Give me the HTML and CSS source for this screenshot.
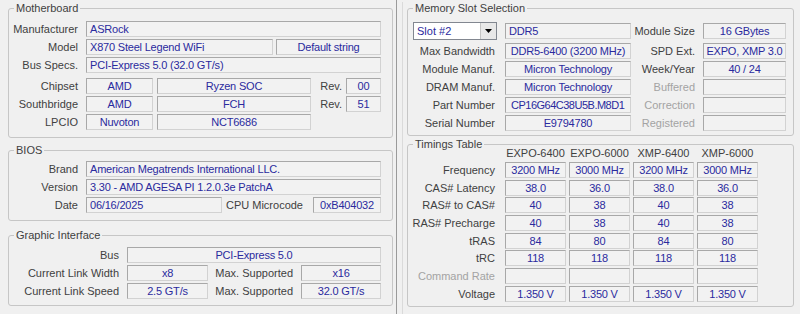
FILE: index.html
```html
<!DOCTYPE html>
<html lang="en">

<head>
    <meta charset="UTF-8">
    <meta name="viewport" content="width=device-width, initial-scale=1.0">
    <title>CPU-Z</title>
    <link rel="stylesheet" href="styles.css">
</head>

<body>
    <!-- 左边: Mainboard -->
    <div class="win win-left">
        <fieldset class="grp grp-mb">
            <legend>Motherboard</legend>
            <div class="row">
                <span class="lb lb-l">Manufacturer</span>
                <span class="f w295">ASRock</span>
            </div>
            <div class="row">
                <span class="lb lb-l">Model</span>
                <span class="f w187">X870 Steel Legend WiFi</span>
                <span class="f w105 c ml3">Default string</span>
            </div>
            <div class="row">
                <span class="lb lb-l">Bus Specs.</span>
                <span class="f w295">PCI-Express 5.0 (32.0 GT/s)</span>
            </div>
            <div class="row row-sep">
                <span class="lb lb-l">Chipset</span>
                <span class="f w67 c">AMD</span>
                <span class="f w154 c ml4">Ryzen SOC</span>
                <span class="lb lb-rev">Rev.</span>
                <span class="f w35 c ml4">00</span>
            </div>
            <div class="row">
                <span class="lb lb-l">Southbridge</span>
                <span class="f w67 c">AMD</span>
                <span class="f w154 c ml4">FCH</span>
                <span class="lb lb-rev">Rev.</span>
                <span class="f w35 c ml4">51</span>
            </div>
            <div class="row">
                <span class="lb lb-l">LPCIO</span>
                <span class="f w67 c">Nuvoton</span>
                <span class="f w154 c ml4">NCT6686</span>
            </div>
        </fieldset>

        <fieldset class="grp grp-bios">
            <legend>BIOS</legend>
            <div class="row">
                <span class="lb lb-l">Brand</span>
                <span class="f w295">American Megatrends International LLC.</span>
            </div>
            <div class="row">
                <span class="lb lb-l">Version</span>
                <span class="f w295">3.30 - AMD AGESA PI 1.2.0.3e PatchA</span>
            </div>
            <div class="row">
                <span class="lb lb-l">Date</span>
                <span class="f w136">06/16/2025</span>
                <span class="lb lb-mc">CPU Microcode</span>
                <span class="f w68 c">0xB404032</span>
            </div>
        </fieldset>

        <fieldset class="grp grp-gfx">
            <legend>Graphic Interface</legend>
            <div class="row">
                <span class="lb lb-g">Bus</span>
                <span class="f w254 c">PCI-Express 5.0</span>
            </div>
            <div class="row">
                <span class="lb lb-g">Current Link Width</span>
                <span class="f w81 c">x8</span>
                <span class="lb lb-max">Max. Supported</span>
                <span class="f w80 c">x16</span>
            </div>
            <div class="row">
                <span class="lb lb-g">Current Link Speed</span>
                <span class="f w81 c">2.5 GT/s</span>
                <span class="lb lb-max">Max. Supported</span>
                <span class="f w80 c">32.0 GT/s</span>
            </div>
        </fieldset>
    </div>

    <!-- 右边: SPD -->
    <div class="win win-right">
        <div class="page">
            <fieldset class="grp grp-slot">
                <legend>Memory Slot Selection</legend>
                <div class="row row-first">
                    <div class="combo">
                        <span class="combo-text">Slot #2</span>
                        <span class="combo-btn"><svg width="7" height="4" viewBox="0 0 7 4"><path d="M0 0H7L3.5 4Z" fill="#000"/></svg></span>
                    </div>
                    <span class="f w126">DDR5</span>
                    <span class="lb lb-r2">Module Size</span>
                    <span class="f w83 c">16 GBytes</span>
                </div>
                <div class="row">
                    <span class="lb lb-r">Max Bandwidth</span>
                    <span class="f w126 c">DDR5-6400 (3200 MHz)</span>
                    <span class="lb lb-r2">SPD Ext.</span>
                    <span class="f w83 c">EXPO, XMP 3.0</span>
                </div>
                <div class="row">
                    <span class="lb lb-r">Module Manuf.</span>
                    <span class="f w126 c">Micron Technology</span>
                    <span class="lb lb-r2">Week/Year</span>
                    <span class="f w83 c">40 / 24</span>
                </div>
                <div class="row">
                    <span class="lb lb-r">DRAM Manuf.</span>
                    <span class="f w126 c">Micron Technology</span>
                    <span class="lb lb-r2 off">Buffered</span>
                    <span class="f w83"></span>
                </div>
                <div class="row">
                    <span class="lb lb-r">Part Number</span>
                    <span class="f w126 pn">CP16G64C38U5B.M8D1</span>
                    <span class="lb lb-r2 off">Correction</span>
                    <span class="f w83"></span>
                </div>
                <div class="row">
                    <span class="lb lb-r">Serial Number</span>
                    <span class="f w126 c">E9794780</span>
                    <span class="lb lb-r2 off">Registered</span>
                    <span class="f w83"></span>
                </div>
            </fieldset>

            <fieldset class="grp grp-tim">
                <legend>Timings Table</legend>
                <div class="trow thead">
                    <span class="lb lb-r"></span>
                    <span class="th">EXPO-6400</span>
                    <span class="th">EXPO-6000</span>
                    <span class="th">XMP-6400</span>
                    <span class="th">XMP-6000</span>
                </div>
                <div class="trow">
                    <span class="lb lb-r">Frequency</span>
                    <span class="f td">3200 MHz</span>
                    <span class="f td">3000 MHz</span>
                    <span class="f td">3200 MHz</span>
                    <span class="f td">3000 MHz</span>
                </div>
                <div class="trow">
                    <span class="lb lb-r">CAS# Latency</span>
                    <span class="f td">38.0</span>
                    <span class="f td">36.0</span>
                    <span class="f td">38.0</span>
                    <span class="f td">36.0</span>
                </div>
                <div class="trow">
                    <span class="lb lb-r">RAS# to CAS#</span>
                    <span class="f td">40</span>
                    <span class="f td">38</span>
                    <span class="f td">40</span>
                    <span class="f td">38</span>
                </div>
                <div class="trow">
                    <span class="lb lb-r">RAS# Precharge</span>
                    <span class="f td">40</span>
                    <span class="f td">38</span>
                    <span class="f td">40</span>
                    <span class="f td">38</span>
                </div>
                <div class="trow">
                    <span class="lb lb-r">tRAS</span>
                    <span class="f td">84</span>
                    <span class="f td">80</span>
                    <span class="f td">84</span>
                    <span class="f td">80</span>
                </div>
                <div class="trow">
                    <span class="lb lb-r">tRC</span>
                    <span class="f td">118</span>
                    <span class="f td">118</span>
                    <span class="f td">118</span>
                    <span class="f td">118</span>
                </div>
                <div class="trow">
                    <span class="lb lb-r off">Command Rate</span>
                    <span class="f td"></span>
                    <span class="f td"></span>
                    <span class="f td"></span>
                    <span class="f td"></span>
                </div>
                <div class="trow">
                    <span class="lb lb-r">Voltage</span>
                    <span class="f td">1.350 V</span>
                    <span class="f td">1.350 V</span>
                    <span class="f td">1.350 V</span>
                    <span class="f td">1.350 V</span>
                </div>
            </fieldset>
        </div>
    </div>
</body>

</html>
```

FILE: styles.css
```css
* {
    margin: 0;
    padding: 0;
    box-sizing: border-box;
}

body {
    width: 800px;
    height: 314px;
    overflow: hidden;
    display: flex;
    background-color: #f0f0f0;
    font-family: "Liberation Sans", Arial, sans-serif;
    font-size: 11px;
    color: #404040;
}

.win {
    height: 100%;
}

.win-left {
    width: 397px;
    padding-left: 8px;
    padding-right: 3px;
    border-right: 1px solid #9a9a9a;
}

.win-right {
    flex: 1;
    padding-left: 5px;
    padding-right: 6px;
}

.page {
    height: 100%;
    border-left: 1px solid #dadada;
    padding-left: 4px;
}

/* 分组框 */
.grp {
    border: 1px solid #c6c6c6;
    border-radius: 3px;
}

.grp legend {
    margin-left: 5px;
    padding: 0 2px;
    line-height: 13px;
    color: #404040;
}

.grp-mb {
    margin-top: 2px;
    padding: 6px 0 7px 0;
}

.grp-bios {
    margin-top: 6px;
    padding: 4px 0 7px 0;
}

.grp-gfx {
    margin-top: 8px;
    padding: 5px 0 6px 0;
}

.grp-slot {
    margin-top: 2px;
    padding: 7px 0 4px 0;
}

.grp-tim {
    margin-top: 2px;
    padding: 0 0 4px 0;
}

.row {
    display: flex;
    align-items: center;
    height: 16px;
    margin-bottom: 2px;
}

.row:last-child {
    margin-bottom: 0;
}

.row-sep {
    margin-top: 5px;
}

.row-first {
    height: 18px;
    margin-bottom: 3px;
}

/* 标签 */
.lb {
    display: block;
    flex: none;
    text-align: right;
    white-space: nowrap;
    line-height: 16px;
}

.lb-l {
    width: 69px;
    margin-right: 8px;
}

.lb-rev {
    width: 31px;
}

.lb-mc {
    width: 81px;
    margin-right: 10px;
}

.lb-g {
    width: 110px;
    margin-right: 8px;
}

.lb-max {
    width: 85px;
    margin-right: 8px;
}

.lb-r {
    width: 87px;
    margin-right: 10px;
}

.lb-r2 {
    width: 64px;
    margin-right: 8px;
}

.off {
    color: #a3a3a3;
}

/* 数值框 */
.f {
    display: block;
    flex: none;
    height: 16px;
    line-height: 14px;
    padding: 0 3px;
    white-space: nowrap;
    overflow: hidden;
    letter-spacing: -0.2px;
    color: #2a2a9e;
    background-color: #f2f2f2;
    border: 1px solid;
    border-color: #a8a8a8 #d2d2d2 #d2d2d2 #a8a8a8;
}

.c {
    text-align: center;
    padding: 0;
}

.pn {
    padding-left: 5px;
    letter-spacing: -0.5px;
}

.ml3 {
    margin-left: 3px;
}

.ml4 {
    margin-left: 4px;
}

.w295 { width: 295px; }
.w254 { width: 254px; }
.w187 { width: 187px; }
.w154 { width: 154px; }
.w136 { width: 136px; }
.w126 { width: 126px; }
.w105 { width: 105px; }
.w83 { width: 83px; }
.w81 { width: 81px; }
.w80 { width: 80px; }
.w68 { width: 68px; }
.w67 { width: 67px; }
.w35 { width: 35px; }

/* 下拉框 */
.combo {
    display: flex;
    width: 84px;
    height: 18px;
    margin-left: 5px;
    margin-right: 8px;
    background-color: #ffffff;
    border: 1px solid #828790;
}

.combo-text {
    flex: 1;
    padding-left: 3px;
    line-height: 16px;
    color: #2a2a9e;
}

.combo-btn {
    width: 16px;
    display: flex;
    align-items: center;
    justify-content: center;
    background-color: #e8e8e8;
    border-left: 1px solid #c4c4c4;
}

/* 时序表 */
.trow {
    display: flex;
    align-items: center;
    height: 16px;
    margin-bottom: 1.7px;
}

.trow:last-child {
    margin-bottom: 0;
}

.thead {
    height: 12px;
    margin-top: -4px;
    margin-bottom: 3px;
}

.th {
    width: 61px;
    margin-right: 3px;
    text-align: center;
    line-height: 12px;
    white-space: nowrap;
}

.td {
    width: 61px;
    margin-right: 3px;
    text-align: center;
    padding: 0;
}
```
